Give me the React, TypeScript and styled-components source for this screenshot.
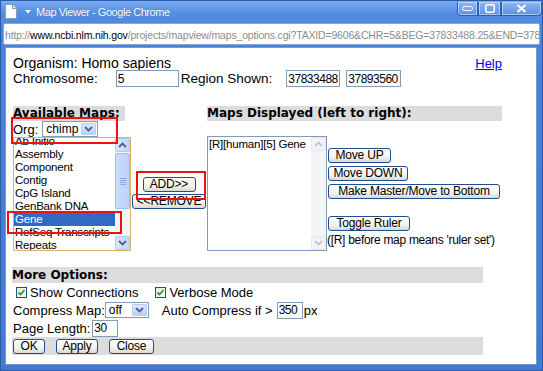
import styled, { createGlobalStyle } from 'styled-components'

const GlobalStyle = createGlobalStyle`
  html, body { margin:0; padding:0; }
  body {
    width:543px;
    height:371px;
    overflow:hidden;
    font-family:"Liberation Sans", Arial, sans-serif;
  }
`

const availableMaps = [
  'Ab Initio',
  'Assembly',
  'Component',
  'Contig',
  'CpG Island',
  'GenBank DNA',
  'Gene',
  'RefSeq Transcripts',
  'Repeats',
]

function Chevron({ up, color }: { up?: boolean; color: string }) {
  return (
    <svg width="9" height="6" viewBox="0 0 9 6">
      <path d={up ? 'M1 5 L4.5 1.5 L8 5' : 'M1 1 L4.5 4.5 L8 1'} fill="none" stroke={color} strokeWidth="1.8" />
    </svg>
  )
}

function ScrollBar({ disabled }: { disabled?: boolean }) {
  const c = disabled ? '#c3c7d0' : '#4d6185'
  return (
    <Scroll>
      <ScrollBtn $disabled={disabled}><Chevron up color={c} /></ScrollBtn>
      {!disabled && (
        <Thumb>
          <Grip /><Grip /><Grip /><Grip />
        </Thumb>
      )}
      <ScrollGap />
      <ScrollBtn $disabled={disabled}><Chevron color={c} /></ScrollBtn>
    </Scroll>
  )
}

function Check({ label }: { label: string }) {
  return (
    <CheckLabel>
      <CheckBox>
        <svg width="9" height="9" viewBox="0 0 9 9">
          <path d="M1.5 4.5 L3.5 6.5 L7.5 2" fill="none" stroke="#21a121" strokeWidth="1.8" />
        </svg>
      </CheckBox>
      {label}
    </CheckLabel>
  )
}

function Dropdown({ value, w }: { value: string; w: number }) {
  return (
    <Select $w={w}>
      {value}
      <SelectBtn><Chevron color="#4d6185" /></SelectBtn>
    </Select>
  )
}

export default function App() {
  return (
    <Frame>
      <GlobalStyle />
      <TitleBar>
        <svg width="12" height="15" viewBox="0 0 12 15">
          <path d="M0.5 0.5 H7.5 L11.5 4.5 V14.5 H0.5 Z" fill="#fff" stroke="#8a9bb5" />
          <path d="M7.5 0.5 V4.5 H11.5" fill="#e6ebf3" stroke="#8a9bb5" />
        </svg>
        <svg width="6" height="4" viewBox="0 0 6 4" style={{ marginLeft: 8 }}>
          <path d="M0 0 H6 L3 3.5 Z" fill="#fff" />
        </svg>
        <Title>Map Viewer - Google Chrome</Title>
        <WinButtons>
          <WinBtn $w={21}>
            <svg width="11" height="5" viewBox="0 0 11 5"><rect x="0.5" y="0.5" width="10" height="4" rx="2" fill="none" stroke="#fff" /></svg>
          </WinBtn>
          <WinBtn $w={23}>
            <svg width="10" height="9" viewBox="0 0 10 9"><rect x="0.75" y="0.75" width="8.5" height="7.5" rx="1.5" fill="none" stroke="#fff" strokeWidth="1.5" /></svg>
          </WinBtn>
          <WinBtn $w={41}>
            <svg width="11" height="9" viewBox="0 0 11 9"><path d="M1.5 1 L9.5 8 M9.5 1 L1.5 8" stroke="#fff" strokeWidth="2" /></svg>
          </WinBtn>
        </WinButtons>
      </TitleBar>

      <AddressBar>
        http://<b>www.ncbi.nlm.nih.gov</b>/projects/mapview/maps_options.cgi?TAXID=9606&amp;CHR=5&amp;BEG=37833488.25&amp;END=37893560.25
      </AddressBar>

      <Page>
        <TopRow>
          <Organism>Organism: Homo sapiens</Organism>
          <Help href="#">Help</Help>
        </TopRow>
        <FieldRow>
          <span>Chromosome:</span>
          <Field $w={63} $ml={18} defaultValue="5" readOnly />
          <Label $ml={2}>Region Shown:</Label>
          <Field $w={54} $ml={14} defaultValue="37833488" readOnly />
          <Field $w={55} $ml={6} defaultValue="37893560" readOnly />
        </FieldRow>

        <Columns>
          <div>
            <Heading $w={112}>Available Maps:</Heading>
            <OrgRow>
              Org:
              <Dropdown value="chimp" w={56} />
            </OrgRow>
            <ListRow>
              <ListBox $w={118} $h={114} $border="#d9b56a">
                <Items $offset={-3}>
                  {availableMaps.map((m) => (
                    <Item key={m} $sel={m === 'Gene'}>{m}</Item>
                  ))}
                </Items>
                <ScrollBar />
              </ListBox>
              <MidButtons>
                <Button $w={53}>ADD&gt;&gt;</Button>
                <Button $w={74}>&lt;&lt;REMOVE</Button>
              </MidButtons>
            </ListRow>
          </div>

          <div>
            <Heading $w={295}>Maps Displayed (left to right):</Heading>
            <ShownRow>
              <ListBox $w={120} $h={115} $border="#7f9db9">
                <Items $offset={1}>
                  <Item>[R][human][5] Gene</Item>
                </Items>
                <ScrollBar disabled />
              </ListBox>
              <SideButtons>
                <Button $w={63}>Move UP</Button>
                <Button $w={80}>Move DOWN</Button>
                <Button $w={172}>Make Master/Move to Bottom</Button>
                <Button $w={82} $mt={14}>Toggle Ruler</Button>
                <Note>([R] before map means 'ruler set')</Note>
              </SideButtons>
            </ShownRow>
          </div>
        </Columns>

        <Options>
          <Heading $w={471} $h={16}>More Options:</Heading>
          <OptRow>
            <Check label="Show Connections" />
            <Check label="Verbose Mode" />
          </OptRow>
          <OptRow>
            Compress Map:
            <Dropdown value="off" w={44} />
            <Label $ml={13}>Auto Compress if &gt;</Label>
            <Field $w={26} $ml={4} defaultValue="350" readOnly />
            <Label $ml={1}>px</Label>
          </OptRow>
          <OptRow>
            Page Length:
            <Field $w={26} $ml={2} defaultValue="30" readOnly />
          </OptRow>
          <ButtonBar>
            <Button $w={32}>OK</Button>
            <Button $w={42}>Apply</Button>
            <Button $w={45}>Close</Button>
          </ButtonBar>
        </Options>
      </Page>

      <Mark $x={10} $y={116} $w={107} $h={27} />
      <Mark $x={6} $y={210} $w={115} $h={23} />
      <Mark $x={135} $y={170} $w={70} $h={29} />
    </Frame>
  )
}

const Frame = styled.div`
  position:relative;
  width:543px;
  height:371px;
  box-sizing:border-box;
  display:flex;
  flex-direction:column;
  background:linear-gradient(180deg, #7aaaf0 0px, #558ee2 12px, #4a83da 30px, #4379d2 100%);
  border:1px solid #2a5cae;
`
const TitleBar = styled.div`
  display:flex;
  align-items:center;
  height:21px;
  padding-left:4px;
  flex-shrink:0;
`
const Title = styled.span`
  margin-left:5px;
  color:#fff;
  font-size:11px;
  letter-spacing:-0.45px;
  text-shadow:0 0 1px rgba(0,0,40,0.35);
`
const WinButtons = styled.div`
  display:flex;
  margin-left:auto;
  margin-right:0px;
  align-self:flex-start;
  margin-top:1px;
`
const WinBtn = styled.div<{ $w: number }>`
  width:${(p) => p.$w}px;
  height:14px;
  display:flex;
  align-items:center;
  justify-content:center;
  box-sizing:border-box;
  border:1px solid #2f5fae;
  border-top:none;
  background:linear-gradient(180deg, #8db6f0, #5d93e2);
  box-shadow:inset 0 0 0 1px rgba(255,255,255,0.45);
  &:first-child { border-bottom-left-radius:4px; }
  &:last-child { border-bottom-right-radius:4px; }
`
const AddressBar = styled.div`
  flex-shrink:0;
  margin:1px 2px 0 2px;
  height:22px;
  box-sizing:border-box;
  background:#fff;
  border:1px solid #86a7d9;
  border-radius:2px;
  padding-left:1px;
  font-size:10.5px;
  line-height:22px;
  color:#8c8c8c;
  white-space:nowrap;
  overflow:hidden;
  letter-spacing:-0.17px;
  b { color:#000; font-weight:normal; }
`
const Page = styled.div`
  flex:1;
  margin:2px 5px 5px 4px;
  background:#fff;
  border:1px solid #7c98c6;
  padding:8px 34px 0 7px;
  font-size:13px;
  color:#000;
  overflow:hidden;
`
const TopRow = styled.div`
  display:flex;
  justify-content:space-between;
  align-items:flex-start;
  height:14px;
`
const Organism = styled.span`
  font-size:14px;
  line-height:14px;
`
const Help = styled.a`
  color:#0000ee;
  font-size:13px;
  line-height:14px;
  margin-top:1px;
`
const FieldRow = styled.div`
  display:flex;
  align-items:center;
  height:17px;
  font-size:13.5px;
`
const Label = styled.span<{ $ml: number }>`
  margin-left:${(p) => p.$ml}px;
`
const Field = styled.input<{ $w: number; $ml: number }>`
  width:${(p) => p.$w}px;
  margin-left:${(p) => p.$ml}px;
  height:17px;
  box-sizing:border-box;
  border:1px solid #7f9db9;
  padding:0 1px;
  font-family:"Liberation Sans", Arial, sans-serif;
  font-size:12px;
  color:#000;
  outline:none;
  letter-spacing:-0.5px;
`
const Columns = styled.div`
  display:grid;
  grid-template-columns:194px 295px;
  margin-top:19px;
`
const Heading = styled.div<{ $w: number; $h?: number }>`
  width:${(p) => p.$w}px;
  height:${(p) => p.$h ?? 15}px;
  line-height:${(p) => p.$h ?? 15}px;
  background:#dcdcdc;
  font-family:"DejaVu Sans", sans-serif;
  font-weight:bold;
  font-size:12px;
`
const OrgRow = styled.div`
  display:flex;
  align-items:center;
  gap:4px;
  height:16px;
`
const Select = styled.div<{ $w: number }>`
  width:${(p) => p.$w}px;
  height:16px;
  box-sizing:border-box;
  border:1px solid #7f9db9;
  padding:1px 1px 1px 3px;
  display:flex;
  align-items:center;
  font-size:12px;
  background:#fff;
`
const SelectBtn = styled.span`
  margin-left:auto;
  width:15px;
  height:100%;
  display:flex;
  align-items:center;
  justify-content:center;
  box-sizing:border-box;
  border:1px solid #b8cdf5;
  border-radius:1px;
  background:linear-gradient(180deg, #dde8fe, #b9cffa);
`
const ListRow = styled.div`
  display:flex;
`
const ListBox = styled.div<{ $w: number; $h: number; $border: string }>`
  width:${(p) => p.$w}px;
  height:${(p) => p.$h}px;
  box-sizing:border-box;
  border:1px solid ${(p) => p.$border};
  background:#fff;
  display:flex;
  overflow:hidden;
`
const Items = styled.div<{ $offset: number }>`
  flex:1;
  overflow:hidden;
  padding-top:${(p) => Math.max(p.$offset, 0)}px;
  > :first-child { margin-top:${(p) => Math.min(p.$offset, 0)}px; }
  font-size:11.5px;
  letter-spacing:-0.2px;
`
const Item = styled.div<{ $sel?: boolean }>`
  height:13px;
  line-height:13px;
  padding-left:1px;
  white-space:nowrap;
  background:${(p) => (p.$sel ? '#316ac5' : 'transparent')};
  color:${(p) => (p.$sel ? '#fff' : '#000')};
`
const Scroll = styled.div`
  width:15px;
  display:flex;
  flex-direction:column;
  background:#f4f5f8;
`
const ScrollBtn = styled.div<{ $disabled?: boolean }>`
  height:14px;
  display:flex;
  align-items:center;
  justify-content:center;
  box-sizing:border-box;
  border:1px solid ${(p) => (p.$disabled ? '#e6e8ee' : '#b3c7f2')};
  border-radius:2px;
  background:${(p) => (p.$disabled ? '#f2f3f6' : 'linear-gradient(90deg, #dbe6fd, #c1d4fb)')};
`
const Thumb = styled.div`
  height:56px;
  margin-top:1px;
  box-sizing:border-box;
  border:1px solid #a3bbef;
  border-radius:2px;
  background:linear-gradient(90deg, #cfdcfc, #bcd0fa);
  display:flex;
  flex-direction:column;
  align-items:center;
  justify-content:center;
  gap:1px;
`
const Grip = styled.span`
  width:6px;
  height:1px;
  background:#8fa9e0;
`
const ScrollGap = styled.div`
  flex:1;
`
const MidButtons = styled.div`
  width:76px;
  display:flex;
  flex-direction:column;
  align-items:center;
  gap:2px;
  padding-top:40px;
`
const Button = styled.button<{ $w: number; $mt?: number }>`
  width:${(p) => p.$w}px;
  height:15px;
  margin-top:${(p) => p.$mt ?? 0}px;
  padding:0;
  box-sizing:border-box;
  border:1px solid #1f4f8f;
  border-radius:3px;
  background:linear-gradient(180deg, #ffffff 0%, #f3f3ef 60%, #dcd8cf 100%);
  font-family:"Liberation Sans", Arial, sans-serif;
  font-size:12px;
  line-height:13px;
  color:#000;
  white-space:nowrap;
  letter-spacing:-0.2px;
`
const ShownRow = styled.div`
  display:flex;
  margin-top:15px;
`
const SideButtons = styled.div`
  display:flex;
  flex-direction:column;
  align-items:flex-start;
  gap:3px;
  padding-top:12px;
  margin-left:1px;
`
const Note = styled.div`
  margin-top:-1px;
  margin-left:-1px;
  font-size:12px;
  letter-spacing:-0.3px;
`
const Options = styled.div`
  margin-top:16px;
  margin-left:-1px;
  width:471px;
`
const OptRow = styled.div`
  display:flex;
  align-items:center;
  height:18px;
  padding-left:1px;
`
const CheckLabel = styled.label`
  display:flex;
  align-items:center;
  gap:3px;
  margin-left:3px;
  margin-right:14px;
`
const CheckBox = styled.span`
  width:11px;
  height:11px;
  box-sizing:border-box;
  border:1px solid #1c5180;
  background:linear-gradient(135deg, #e6e6e1, #ffffff);
  display:flex;
  align-items:center;
  justify-content:center;
`
const ButtonBar = styled.div`
  display:flex;
  align-items:center;
  gap:11px;
  height:18px;
  padding-left:1px;
  background:#dcdcdc;
`
const Mark = styled.div<{ $x: number; $y: number; $w: number; $h: number }>`
  position:absolute;
  left:${(p) => p.$x}px;
  top:${(p) => p.$y}px;
  width:${(p) => p.$w}px;
  height:${(p) => p.$h}px;
  box-sizing:border-box;
  border:2px solid #ee1111;
  pointer-events:none;
`
